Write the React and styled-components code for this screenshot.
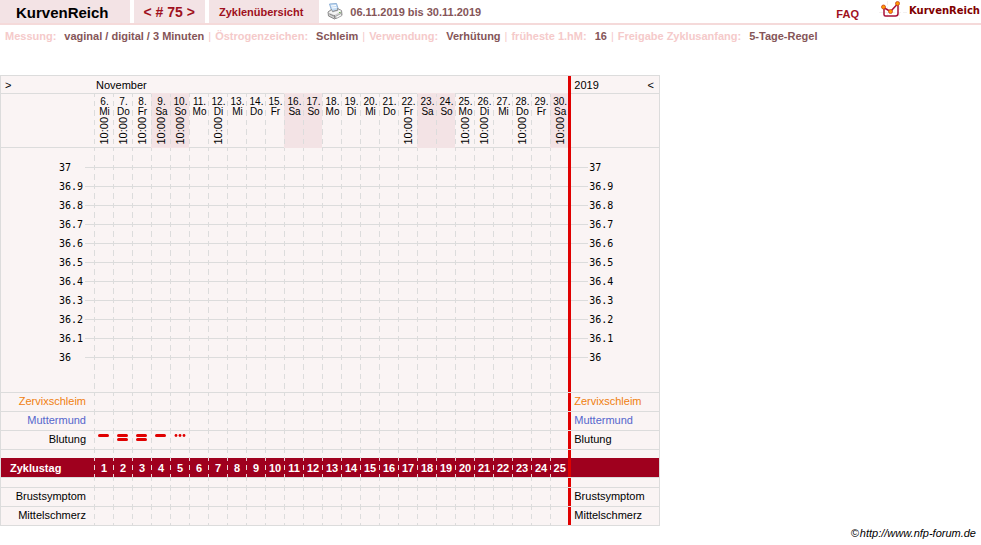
import styled, { createGlobalStyle, css } from 'styled-components'

const weekdays = ['Mi', 'Do', 'Fr', 'Sa', 'So', 'Mo', 'Di']
const measuredDays = [6, 7, 8, 9, 10, 12, 22, 25, 26, 28, 30]
const bleeding = { 6: 'light', 7: 'strong', 8: 'strong', 9: 'light', 10: 'spotting' }

const days = Array.from({ length: 25 }, (_, index) => {
  const date = index + 6
  const weekday = weekdays[index % 7]
  return {
    date,
    weekday,
    cycleDay: index + 1,
    weekend: weekday === 'Sa' || weekday === 'So',
    time: measuredDays.includes(date) ? '10:00' : '',
  }
})

const temperatures = [
  '37',
  '36.9',
  '36.8',
  '36.7',
  '36.6',
  '36.5',
  '36.4',
  '36.3',
  '36.2',
  '36.1',
  '36',
]

const settings = [
  { label: 'Messung:', value: 'vaginal / digital / 3 Minuten' },
  { label: 'Östrogenzeichen:', value: 'Schleim' },
  { label: 'Verwendung:', value: 'Verhütung' },
  { label: 'früheste 1.hM:', value: '16' },
  { label: 'Freigabe Zyklusanfang:', value: '5-Tage-Regel' },
]

export default function App() {
  return (
    <>
      <GlobalStyle />
      <Header>
        <Title>KurvenReich</Title>
        <CycleNav>
          <a href="#74" aria-label="Vorheriger Zyklus">
            &lt;
          </a>{' '}
          # 75{' '}
          <a href="#76" aria-label="Nächster Zyklus">
            &gt;
          </a>
        </CycleNav>
        <OverviewLink href="#zyklen">Zyklenübersicht</OverviewLink>
        <PrintButton aria-label="Drucken">
          <PrinterIcon />
        </PrintButton>
        <Period>06.11.2019 bis 30.11.2019</Period>
        <FaqLink href="#faq">FAQ</FaqLink>
        <Logo href="#start">
          <LogoIcon />
          <LogoText>KurvenReich</LogoText>
        </Logo>
      </Header>
      <Settings>
        {settings.map(({ label, value }) => (
          <Setting key={label}>
            <dt>{label}</dt>
            <dd>{value}</dd>
          </Setting>
        ))}
      </Settings>
      <main>
        <Chart>
          <colgroup>
            <LabelCol />
            {days.map(({ date }) => (
              <DayCol key={date} $last={date === 30} />
            ))}
            <MarkerCol />
            <EndCol />
          </colgroup>
          <thead>
            <MonthRow>
              <th>
                <ArrowButton aria-label="Weiter">&gt;</ArrowButton>
              </th>
              <th colSpan={25}>November</th>
              <Marker />
              <th>
                <YearCell>
                  2019
                  <ArrowButton aria-label="Zurück">&lt;</ArrowButton>
                </YearCell>
              </th>
            </MonthRow>
            <tr>
              <DateSpace />
              {days.map(({ date, weekday, weekend, time }) => (
                <DateCell key={date} $weekend={weekend}>
                  <div>{date}.</div>
                  <div>{weekday}</div>
                  {time && <Time>{time}</Time>}
                </DateCell>
              ))}
              <Marker />
              <DateSpace />
            </tr>
          </thead>
          <tbody>
            <EmptyRow height={10} open />
            {temperatures.map(temperature => (
              <TemperatureRow key={temperature}>
                <ScaleStart>{temperature}</ScaleStart>
                {days.map(({ date }) => (
                  <CurveCell key={date} />
                ))}
                <Marker />
                <ScaleEnd>{temperature}</ScaleEnd>
              </TemperatureRow>
            ))}
            <EmptyRow height={26} />
            <SymptomRow label="Zervixschleim" color="#f08010" />
            <SymptomRow label="Muttermund" color="#5566cc" />
            <SymptomRow
              label="Blutung"
              renderDay={date =>
                bleeding[date] && <BleedingIcon kind={bleeding[date]} />
              }
            />
            <EmptyRow height={8} open />
            <CycleRow>
              <th>Zyklustag</th>
              {days.map(({ cycleDay }) => (
                <CycleCell key={cycleDay}>{cycleDay}</CycleCell>
              ))}
              <Marker $gap />
              <td />
            </CycleRow>
            <EmptyRow height={10} />
            <SymptomRow label="Brustsymptom" />
            <SymptomRow label="Mittelschmerz" />
          </tbody>
        </Chart>
      </main>
      <Footer>
        ©<a href="#forum">http://www.nfp-forum.de</a>
      </Footer>
    </>
  )
}

function SymptomRow({ label, color = '#000', renderDay }) {
  return (
    <tr>
      <Label $color={color}>{label}</Label>
      {days.map(({ date }) => (
        <DayCell key={date}>{renderDay && renderDay(date)}</DayCell>
      ))}
      <Marker $gap />
      <EndLabel $color={color}>{label}</EndLabel>
    </tr>
  )
}

function EmptyRow({ height, open }) {
  return (
    <Spacer $height={height} $open={open}>
      <td />
      {days.map(({ date }) => (
        <DayCell key={date} />
      ))}
      <Marker $gap={!open} />
      <td />
    </Spacer>
  )
}

function BleedingIcon({ kind }) {
  return (
    <Bleeding width="12" height="8" viewBox="0 0 12 8" fill="#e00000">
      {kind === 'spotting' ? (
        <>
          <circle cx="2" cy="1.5" r="1.4" />
          <circle cx="6" cy="1.5" r="1.4" />
          <circle cx="10" cy="1.5" r="1.4" />
        </>
      ) : (
        <rect width="11" height="3" rx="1.5" />
      )}
      {kind === 'strong' && <rect y="4" width="11" height="3" rx="1.5" />}
    </Bleeding>
  )
}

function PrinterIcon() {
  return (
    <svg width="16" height="17" viewBox="0 0 16 17">
      <path d="M2.5 1 9.5 0.5 11.5 7 5 9Z" fill="#c3dcf5" stroke="#8fb1d6" />
      <path d="M4 3 9 2.5M5 5 9.5 4.5" stroke="#fff" />
      <path
        d="M1 9 4.5 6.5 5.5 8.5 11 7 10.5 5.5 14.5 7.5 15 12 7.5 16 1.5 13Z"
        fill="#cfcfcf"
        stroke="#8c8c8c"
      />
      <path d="M1.5 9.5 7.5 12 14.5 8 11.5 6.5 11 8 5.5 9.5 4.5 7.5Z" fill="#f4f4f4" />
      <path d="M7.5 12V15.5M2.5 11 7 13" stroke="#8a8a8a" />
      <path
        d="M8.5 13.5 14 10.5 15 12.5 9.5 15.5Z"
        fill="#fafafa"
        stroke="#8c8c8c"
        strokeWidth="0.7"
      />
      <path d="M12 9.5h1.5" stroke="#69b34c" />
    </svg>
  )
}

function LogoIcon() {
  return (
    <svg width="30" height="20" viewBox="0 0 30 20">
      <path d="M0 12.5H30M8.5 1V20M20.5 0V20" stroke="#f3f0f0" strokeDasharray="4 2" />
      <path
        d="M5 7.5V14.5Q5 16 6.5 16H16.5Q19 16 19 13.5V4"
        fill="none"
        stroke="#a80f38"
        strokeWidth="1.5"
      />
      <path d="M4.5 7.5 11.5 11.5 18.5 4" fill="none" stroke="#a80f38" strokeWidth="1.5" />
      <g fill="#ff9a00" stroke="#c9401c" strokeWidth="0.8">
        <circle cx="4.5" cy="7" r="2" />
        <circle cx="11.5" cy="11.5" r="2" />
        <circle cx="18.5" cy="3.5" r="2" />
      </g>
    </svg>
  )
}

const GlobalStyle = createGlobalStyle`
  * {
    box-sizing: border-box;
  }
  body {
    margin: 0;
    background: white;
    color: #000;
    font-family: 'Liberation Sans', Arial, sans-serif;
    font-size: 11px;
    line-height: 13px;
  }
  a {
    color: inherit;
    text-decoration: none;
  }
  button {
    padding: 0;
    border: 0;
    background: none;
    color: inherit;
    font: inherit;
    cursor: pointer;
  }
`

const dashes = css`
  background-image: linear-gradient(
    ${({ $dash }) => $dash || '#dcdcdc'} 0 3px,
    transparent 3px 7px,
    ${({ $dash }) => $dash || '#dcdcdc'} 7px 12px,
    transparent 12px 16px,
    ${({ $dash }) => $dash || '#dcdcdc'} 16px 19px
  );
  background-size: 1px 19px;
  background-repeat: repeat-y;
`

const Header = styled.header`
  display: flex;
  height: 25px;
  border-bottom: 2px solid #f5dada;
  font-weight: bold;
`
const tab = css`
  margin: 0 4px 0 0;
  background: #f3e3e5;
  line-height: 25px;
  white-space: nowrap;
`
const Title = styled.h1`
  ${tab}
  padding: 0 21px 0 16px;
  font-size: 15px;
`
const CycleNav = styled.nav`
  ${tab}
  padding: 0 10px;
  color: #9f1020;
  font-size: 14px;
`
const OverviewLink = styled.a`
  ${tab}
  padding: 0 16px 0 10px;
  color: #9f1020;
`
const PrintButton = styled.button`
  display: grid;
  margin: 3px 7px 0 4px;
`
const Period = styled.span`
  color: #855558;
  line-height: 25px;
`
const FaqLink = styled.a`
  margin-left: auto;
  color: #9f1020;
  line-height: 28px;
`
const Logo = styled.a`
  display: flex;
  margin-left: 20px;
  padding-right: 1px;
`
const LogoText = styled.span`
  color: #800000;
  font-family: 'DejaVu Sans', Verdana, sans-serif;
  font-size: 10px;
  line-height: 21px;
`
const Settings = styled.dl`
  display: flex;
  margin: 0;
  padding: 5px 5px 32px;
  font-weight: bold;
  white-space: nowrap;
`
const Setting = styled.div`
  display: flex;
  gap: 8px;
  color: #f5caca;

  dd {
    margin: 0;
    color: #855558;
  }
  & + &::before {
    content: '|';
    margin: 0 -4px 0 4px;
    font-weight: normal;
  }
`
const Chart = styled.table`
  width: 660px;
  border-collapse: separate;
  border-spacing: 0;
  border: solid #dcdcdc;
  border-width: 1px 1px 0;
  background: #faf4f4;
  table-layout: fixed;

  th,
  td {
    height: 19px;
    padding: 0;
    border-bottom: 1px solid #dcdcdc;
    font-weight: normal;
    text-align: left;
  }
`
const LabelCol = styled.col`
  width: 93px;
`
const DayCol = styled.col`
  width: ${({ $last }) => ($last ? '18px' : '19px')};
`
const MarkerCol = styled.col`
  width: 3px;
`
const EndCol = styled.col``

const Marker = styled.td`
  && {
    background: #e00000;
    background-clip: padding-box;
    border-bottom: ${({ $gap }) => ($gap ? '1px solid #eadcdc' : '0')};
  }
`
const MonthRow = styled.tr`
  && th,
  && td {
    height: 17px;
  }
  && th {
    border: 0;
    padding: 1px 3px 0 2px;
  }
  && th:last-child {
    padding-left: 3px;
  }
`
const YearCell = styled.div`
  display: flex;
  justify-content: space-between;
`
const ArrowButton = styled.button`
  display: block;
  padding: 0 2px;
  line-height: 12px;
`
const DateSpace = styled.th`
  && {
    height: 55px;
    border-top: 1px solid #dcdcdc;
  }
`
const DateCell = styled.th`
  ${dashes}
  && {
    height: 55px;
    padding: 3px 0 0 2px;
    border: solid ${({ $weekend }) => ($weekend ? '#f3e3e5' : '#dcdcdc')};
    border-width: 1px 0;
    background-color: ${({ $weekend }) => ($weekend ? '#f3e3e5' : '#faf4f4')};
    font-size: 10px;
    line-height: 10px;
    text-align: center;
    vertical-align: top;
  }
`
const Time = styled.div`
  width: 11px;
  margin: 0 auto;
  font-size: 11px;
  line-height: 11px;
  writing-mode: vertical-rl;
  transform: rotate(180deg);
`
const TemperatureRow = styled.tr`
  && th,
  && td {
    border: 0;
    font-family: 'DejaVu Sans Mono', monospace;
    font-size: 10px;
    line-height: 19px;
  }
`
const scaleLine = css`
  background-image: linear-gradient(#dcdcdc, #dcdcdc);
  background-repeat: no-repeat;
`
const ScaleStart = styled.th`
  ${scaleLine}
  background-position: 100% 9px;
  background-size: 9px 1px;
  && {
    padding-left: 58px;
  }
`
const ScaleEnd = styled.td`
  ${scaleLine}
  background-position: 0 9px;
  background-size: 17px 1px;
  && {
    padding-left: 18px;
  }
`
const DayCell = styled.td`
  ${dashes}
  && {
    vertical-align: top;
  }
`
const CurveCell = styled(DayCell)`
  background-image: linear-gradient(#dcdcdc, #dcdcdc),
    linear-gradient(
      #dcdcdc 0 3px,
      transparent 3px 7px,
      #dcdcdc 7px 12px,
      transparent 12px 16px,
      #dcdcdc 16px 19px
    );
  background-position: 0 9px, 0 0;
  background-repeat: no-repeat;
  background-size: 100% 1px, 1px 19px;
`
const Spacer = styled.tr`
  && td {
    height: ${({ $height }) => $height}px;
    border-bottom-width: ${({ $open }) => ($open ? '0' : '1px')};
  }
`
const Label = styled.th`
  color: ${({ $color }) => $color};
  && {
    padding: 0 8px 2px 0;
    text-align: right;
  }
`
const EndLabel = styled.td`
  color: ${({ $color }) => $color};
  && {
    padding: 0 0 2px 3px;
  }
`
const Bleeding = styled.svg`
  display: block;
  margin: 3px 0 0 4px;
`
const CycleRow = styled.tr`
  && th,
  && td {
    height: 20px;
    padding-top: 1px;
    background-color: #9f001e;
    background-clip: padding-box;
    color: white;
    font-weight: bold;
  }
  && th {
    padding-left: 9px;
  }
  && td:nth-last-child(2) {
    background-color: #e00000;
  }
`
const CycleCell = styled.td.attrs({ $dash: '#e8d5d8' })`
  ${dashes}
  && {
    padding-left: 1px;
    text-align: center;
  }
`
const Footer = styled.footer`
  padding: 1px 5px 0;
  font-style: italic;
  text-align: right;

  a {
    margin-left: 1px;
  }
`
